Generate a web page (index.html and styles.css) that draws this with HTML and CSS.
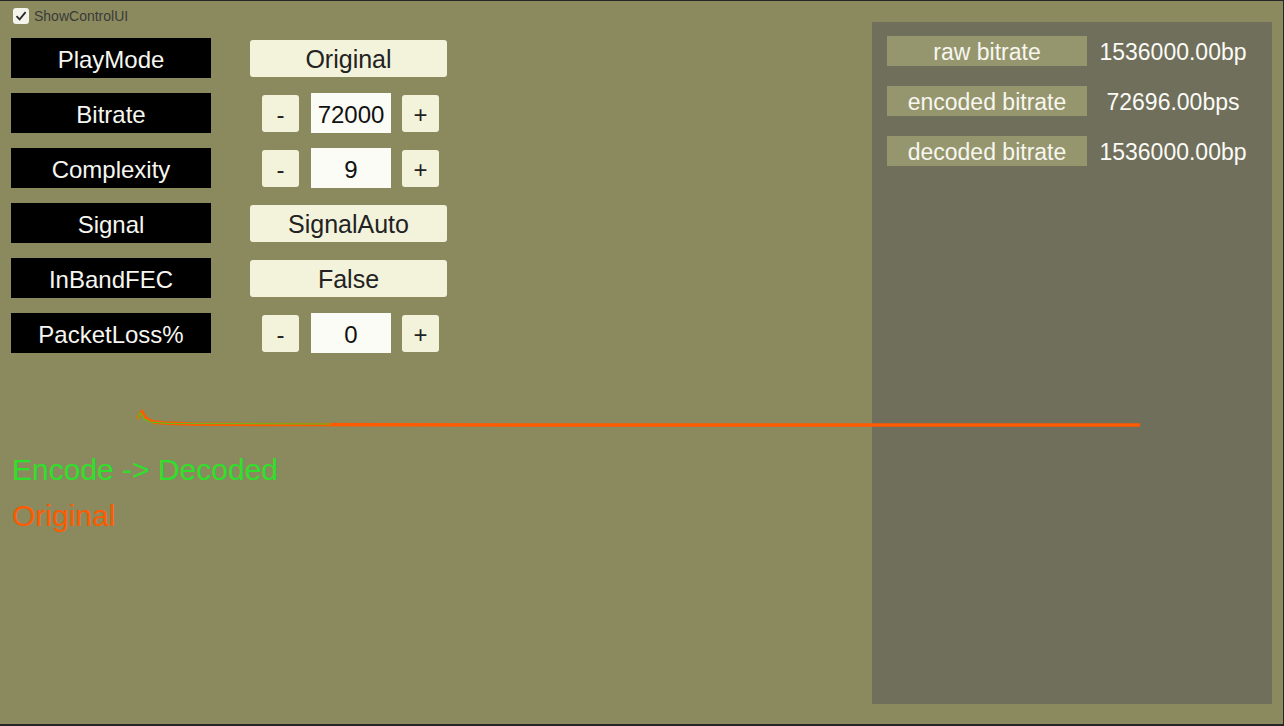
FILE: index.html
```html
<!DOCTYPE html>
<html>
<head>
<meta charset="utf-8">
<link rel="stylesheet" href="styles.css">
</head>
<body>
<div class="screen">
  <div class="left">
    <label class="toggle">
      <span class="check"><svg viewBox="0 0 16 16" width="16" height="16"><path d="M3.5 8.2 L6.6 11.4 L12.6 4.2" fill="none" stroke="#2a2a2a" stroke-width="1.8"/></svg></span>
      <span class="toggle-text">ShowControlUI</span>
    </label>
    <div class="rows">
      <div class="row"><div class="tag">PlayMode</div><div class="btn wide">Original</div></div>
      <div class="row"><div class="tag">Bitrate</div><div class="stepper"><div class="btn small">-</div><div class="field">72000</div><div class="btn small">+</div></div></div>
      <div class="row"><div class="tag">Complexity</div><div class="stepper"><div class="btn small">-</div><div class="field">9</div><div class="btn small">+</div></div></div>
      <div class="row"><div class="tag">Signal</div><div class="btn wide">SignalAuto</div></div>
      <div class="row"><div class="tag">InBandFEC</div><div class="btn wide">False</div></div>
      <div class="row"><div class="tag">PacketLoss%</div><div class="stepper"><div class="btn small">-</div><div class="field">0</div><div class="btn small">+</div></div></div>
    </div>
    <div class="legend">
      <div class="legend-green">Encode -&gt; Decoded</div>
      <div class="legend-orange">Original</div>
    </div>
  </div>
  <div class="panel">
    <div class="stat"><div class="stat-tag">raw bitrate</div><div class="stat-val">1536000.00bp</div></div>
    <div class="stat"><div class="stat-tag">encoded bitrate</div><div class="stat-val">72696.00bps</div></div>
    <div class="stat"><div class="stat-tag">decoded bitrate</div><div class="stat-val">1536000.00bp</div></div>
  </div>
  <svg class="wave" viewBox="0 0 1020 30" width="1020" height="30">
    <polyline points="8,14 10,9 12,7 14,11 18,15 24,17 34,18 60,19 140,19.5 400,20 1010,20" fill="none" stroke="#ff5a00" stroke-width="3.5"/>
    <polyline points="8,14 10,8 12,10 14,14 20,17 40,18.5 200,19" fill="none" stroke="#3ad02a" stroke-width="1.2"/>
  </svg>
</div>
</body>
</html>
```

FILE: styles.css
```css
html, body {
  margin: 0;
  padding: 0;
}
body {
  width: 1284px;
  height: 726px;
  overflow: hidden;
  font-family: "Liberation Sans", Arial, sans-serif;
}
.screen {
  position: relative;
  box-sizing: border-box;
  width: 1284px;
  height: 726px;
  background: #8a8a5e;
  border-top: 1px solid #262626;
  border-right: 1px solid #262626;
  border-bottom: 2px solid #262626;
  display: flex;
}
.left {
  flex: 1;
  padding: 7px 0 0 11px;
}
.toggle {
  display: flex;
  align-items: center;
  height: 16px;
  margin-left: 2px;
  gap: 5px;
}
.check {
  width: 16px;
  height: 16px;
  background: #f4f4ec;
  border-radius: 3px;
  display: block;
}
.check svg { display: block; }
.toggle-text {
  font-size: 14px;
  color: #3a3a3a;
}
.rows {
  margin-top: 14px;
  display: flex;
  flex-direction: column;
  gap: 15px;
}
.row {
  display: flex;
  align-items: center;
  height: 40px;
  gap: 39px;
}
.tag {
  box-sizing: border-box;
  width: 200px;
  height: 40px;
  padding-top: 3px;
  background: #000;
  color: #f6f6f0;
  font-size: 24px;
  display: flex;
  align-items: center;
  justify-content: center;
}
.btn {
  box-sizing: border-box;
  padding-top: 3px;
  background: #f3f3dc;
  color: #222;
  border-radius: 3px;
  font-size: 25px;
  display: flex;
  align-items: center;
  justify-content: center;
}
.btn.wide {
  width: 197px;
  height: 37px;
}
.stepper {
  display: flex;
  align-items: center;
  margin-left: 12px;
  gap: 12px;
}
.btn.small {
  width: 37px;
  height: 37px;
  font-size: 24px;
}
.field {
  box-sizing: border-box;
  width: 80px;
  height: 40px;
  padding-top: 3px;
  background: #fcfcf6;
  color: #111;
  font-size: 24px;
  display: flex;
  align-items: center;
  justify-content: center;
  margin-right: -1px;
}
.legend {
  margin-top: 94px;
  margin-left: 1px;
  font-size: 30px;
  line-height: 46px;
}
.legend-green { color: #2ee02a; }
.legend-orange { color: #ff5a00; }
.panel {
  width: 400px;
  margin: 21px 11px 20px 0;
  background: #706f5b;
  padding: 14px 0 0 15px;
  box-sizing: border-box;
  display: flex;
  flex-direction: column;
  gap: 20px;
}
.stat {
  display: flex;
  align-items: center;
  height: 30px;
}
.stat-tag {
  box-sizing: border-box;
  width: 200px;
  height: 30px;
  padding-top: 3px;
  background: #96966e;
  color: #f7f7f0;
  font-size: 23px;
  display: flex;
  align-items: center;
  justify-content: center;
}
.stat-val {
  box-sizing: border-box;
  padding-top: 3px;
  width: 160px;
  margin-left: 6px;
  color: #fbfbf6;
  font-size: 23px;
  text-align: center;
  white-space: nowrap;
  overflow: hidden;
}
.wave {
  position: absolute;
  left: 130px;
  top: 404px;
}
```
